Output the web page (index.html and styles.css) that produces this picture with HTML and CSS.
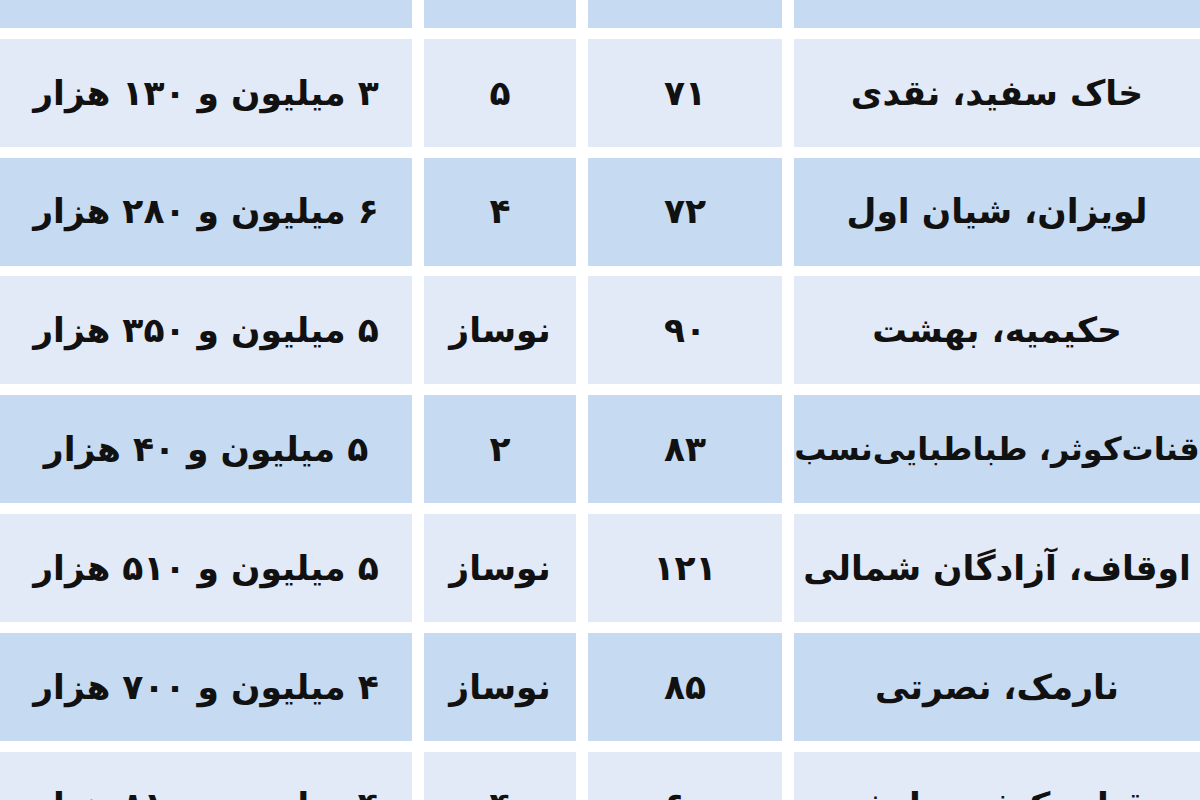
FILE: index.html
```html
<!DOCTYPE html>
<html lang="fa" dir="rtl">
<head>
<meta charset="utf-8">
<title>جدول قیمت</title>
<link rel="stylesheet" href="styles.css">
</head>
<body>
<div class="viewport">
  <div class="table">
    <div class="row row-blue row-first">
      <div class="cell">یوسف‌آباد، فتحی</div>
      <div class="cell">۸۰</div>
      <div class="cell">۳</div>
      <div class="cell">۶ میلیون و ۲۰۰ هزار</div>
    </div>
    <div class="row row-light">
      <div class="cell">خاک سفید، نقدی</div>
      <div class="cell">۷۱</div>
      <div class="cell">۵</div>
      <div class="cell">۳ میلیون و ۱۳۰ هزار</div>
    </div>
    <div class="row row-blue">
      <div class="cell">لویزان، شیان اول</div>
      <div class="cell">۷۲</div>
      <div class="cell">۴</div>
      <div class="cell">۶ میلیون و ۲۸۰ هزار</div>
    </div>
    <div class="row row-light">
      <div class="cell">حکیمیه، بهشت</div>
      <div class="cell">۹۰</div>
      <div class="cell">نوساز</div>
      <div class="cell">۵ میلیون و ۳۵۰ هزار</div>
    </div>
    <div class="row row-blue">
      <div class="cell cell-long">قنات‌کوثر، طباطبایی‌نسب</div>
      <div class="cell">۸۳</div>
      <div class="cell">۲</div>
      <div class="cell">۵ میلیون و ۴۰ هزار</div>
    </div>
    <div class="row row-light">
      <div class="cell">اوقاف، آزادگان شمالی</div>
      <div class="cell">۱۲۱</div>
      <div class="cell">نوساز</div>
      <div class="cell">۵ میلیون و ۵۱۰ هزار</div>
    </div>
    <div class="row row-blue">
      <div class="cell">نارمک، نصرتی</div>
      <div class="cell">۸۵</div>
      <div class="cell">نوساز</div>
      <div class="cell">۴ میلیون و ۷۰۰ هزار</div>
    </div>
    <div class="row row-light">
      <div class="cell">قنات کوثر، نیایش</div>
      <div class="cell">۶۰</div>
      <div class="cell">۴</div>
      <div class="cell">۴ میلیون و ۸۱۰ هزار</div>
    </div>
  </div>
</div>
</body>
</html>
```
FILE: styles.css
```css
html, body {
  margin: 0;
  padding: 0;
  background: #ffffff;
}

.viewport {
  width: 1200px;
  height: 800px;
  overflow: hidden;
}

.table {
  display: flex;
  flex-direction: column;
  gap: 10.8px;
  direction: rtl;
  font-family: "DejaVu Sans", "Noto Sans", sans-serif;
  font-weight: bold;
  font-size: 34.5px;
  color: #111111;
}

.row {
  display: grid;
  grid-template-columns: 406px 194px 152px 412px;
  column-gap: 12px;
  height: 108px;
}

.row-first {
  margin-top: -80px;
}

.cell {
  display: flex;
  align-items: center;
  justify-content: center;
  white-space: nowrap;
  line-height: 1;
}

.cell-long {
  font-size: 32px;
}

.row-light .cell {
  background: #e3eaf7;
}

.row-blue .cell {
  background: #c6daf2;
}
```
